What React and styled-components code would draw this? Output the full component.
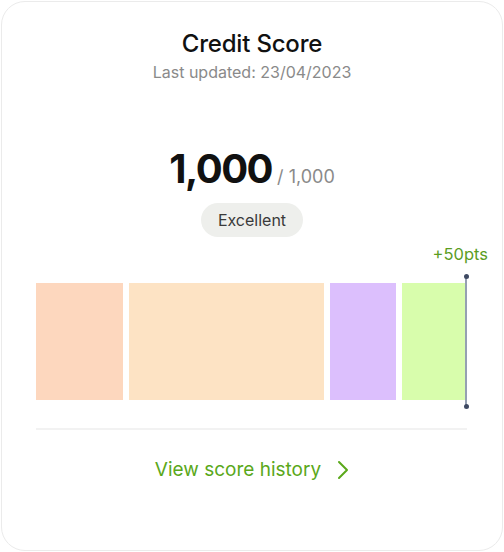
import React from "react";
import styled, { createGlobalStyle } from "styled-components";

const Global = createGlobalStyle`
  html, body { margin: 0; padding: 0; background: #fff; }
  body { font-family: Inter, "Noto Sans", sans-serif; -webkit-font-smoothing: antialiased; }
`;

const Card = styled.div`
  box-sizing: border-box;
  width: 502px;
  height: 550px;
  margin: 1px;
  border: 1px solid #ebebeb;
  border-radius: 24px;
  background: #fff;
  padding: 26px 34px 0 34px;
  display: flex;
  flex-direction: column;
  align-items: stretch;
`;

const Title = styled.h1`
  margin: 0;
  text-align: center;
  font-size: 24px;
  font-weight: 500;
  color: #111;
  line-height: 32px;
  letter-spacing: -0.2px;
`;

const Subtitle = styled.div`
  margin-top: 1px;
  text-align: center;
  font-size: 16px;
  color: #8a8a8a;
  line-height: 22px;
`;

const ScoreRow = styled.div`
  margin-top: 66px;
  display: flex;
  justify-content: center;
  align-items: baseline;
  gap: 5px;
`;

const Score = styled.span`
  font-size: 40px;
  font-weight: 700;
  letter-spacing: -1.5px;
  color: #111;
  line-height: 40px;
`;

const OutOf = styled.span`
  font-size: 18px;
  color: #8a8a8a;
`;

const BadgeWrap = styled.div`
  display: flex;
  justify-content: center;
  margin-top: 14px;
`;

const Badge = styled.div`
  height: 34px;
  padding: 0 17px;
  border-radius: 17px;
  background: #eeefec;
  color: #3a3a3a;
  font-size: 16px;
  display: flex;
  align-items: center;
`;

const Chart = styled.div`
  position: relative;
  margin-top: 46px;
  width: 431px;
  height: 117px;
  display: flex;
  gap: 6px;
`;

const Bar = styled.div`
  flex: ${(p) => p.$w} 0 0;
  background: ${(p) => p.$c};
`;

const Marker = styled.div`
  position: absolute;
  right: 0;
  top: -7px;
  bottom: -7px;
  width: 2px;
  background: #95a0b2;
  &::before, &::after {
    content: "";
    position: absolute;
    left: -1.5px;
    width: 5px;
    height: 5px;
    border-radius: 50%;
    background: #3f4a63;
  }
  &::before { top: -2px; }
  &::after { bottom: -2px; }
`;

const Pts = styled.span`
  position: absolute;
  right: -21px;
  top: -32px;
  font-size: 16.5px;
  color: #5b9d1f;
  white-space: nowrap;
`;

const Divider = styled.div`
  margin-top: 28px;
  width: 431px;
  height: 2px;
  background: #f2f2f2;
`;

const Link = styled.a`
  margin-top: 28px;
  display: flex;
  justify-content: center;
  align-items: center;
  gap: 16px;
  color: #5aa81a;
  font-size: 19px;
  text-decoration: none;
  cursor: pointer;
`;

export default function App() {
  return (
    <>
      <Global />
      <Card>
        <Title>Credit Score</Title>
        <Subtitle>Last updated: 23/04/2023</Subtitle>
        <ScoreRow>
          <Score>1,000</Score>
          <OutOf>/ 1,000</OutOf>
        </ScoreRow>
        <BadgeWrap>
          <Badge>Excellent</Badge>
        </BadgeWrap>
        <Chart>
          <Bar $w={87} $c="#fdd7be" />
          <Bar $w={195} $c="#fde3c4" />
          <Bar $w={66} $c="#dcbffd" />
          <Bar $w={65} $c="#d8fdac" />
          <Marker>
            <Pts>+50pts</Pts>
          </Marker>
        </Chart>
        <Divider />
        <Link>
          View score history
          <svg width="12" height="20" viewBox="0 0 12 20" fill="none">
            <path d="M2 2 L10 10 L2 18" stroke="#5aa81a" strokeWidth="2" strokeLinecap="round" strokeLinejoin="round" />
          </svg>
        </Link>
      </Card>
    </>
  );
}
